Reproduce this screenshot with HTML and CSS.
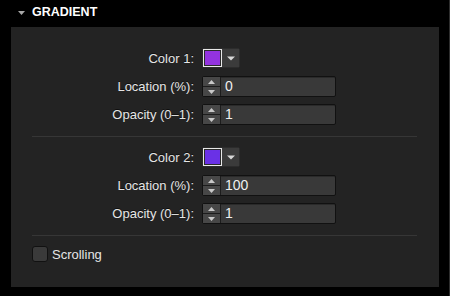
FILE: index.html
```html
<!DOCTYPE html>
<html lang="en">
<head>
    <meta charset="UTF-8">
    <title>Gradient</title>
    <link rel="stylesheet" href="styles.css">
</head>
<body>

    <div class="inspector">
        <div class="section-head">
            <svg class="disclosure" width="7" height="4" viewBox="0 0 7 4"><path d="M0 0H7L3.5 4Z" fill="#a8a8a8"/></svg>
            <span>GRADIENT</span>
        </div>

        <div class="panel">
            <!-- first stop -->
            <div class="group">
                <label class="field-label">Color 1:</label>
                <div class="color-well">
                    <span class="swatch swatch-one"></span>
                    <span class="well-menu">
                        <svg width="8" height="5" viewBox="0 0 8 5"><path d="M0 0.5H8L4 4.5Z" fill="#d8d8d8"/></svg>
                    </span>
                </div>

                <label class="field-label">Location (%):</label>
                <div class="number-field">
                    <span class="stepper">
                        <span class="step"><svg width="7" height="4" viewBox="0 0 7 4"><path d="M0 4H7L3.5 0Z" fill="#c9c9c9"/></svg></span>
                        <span class="step"><svg width="7" height="4" viewBox="0 0 7 4"><path d="M0 0H7L3.5 4Z" fill="#c9c9c9"/></svg></span>
                    </span>
                    <span class="value">0</span>
                </div>

                <label class="field-label">Opacity (0&ndash;1):</label>
                <div class="number-field">
                    <span class="stepper">
                        <span class="step"><svg width="7" height="4" viewBox="0 0 7 4"><path d="M0 4H7L3.5 0Z" fill="#c9c9c9"/></svg></span>
                        <span class="step"><svg width="7" height="4" viewBox="0 0 7 4"><path d="M0 0H7L3.5 4Z" fill="#c9c9c9"/></svg></span>
                    </span>
                    <span class="value">1</span>
                </div>
            </div>

            <hr class="divider">

            <!-- second stop -->
            <div class="group">
                <label class="field-label">Color 2:</label>
                <div class="color-well">
                    <span class="swatch swatch-two"></span>
                    <span class="well-menu">
                        <svg width="8" height="5" viewBox="0 0 8 5"><path d="M0 0.5H8L4 4.5Z" fill="#d8d8d8"/></svg>
                    </span>
                </div>

                <label class="field-label">Location (%):</label>
                <div class="number-field">
                    <span class="stepper">
                        <span class="step"><svg width="7" height="4" viewBox="0 0 7 4"><path d="M0 4H7L3.5 0Z" fill="#c9c9c9"/></svg></span>
                        <span class="step"><svg width="7" height="4" viewBox="0 0 7 4"><path d="M0 0H7L3.5 4Z" fill="#c9c9c9"/></svg></span>
                    </span>
                    <span class="value">100</span>
                </div>

                <label class="field-label">Opacity (0&ndash;1):</label>
                <div class="number-field">
                    <span class="stepper">
                        <span class="step"><svg width="7" height="4" viewBox="0 0 7 4"><path d="M0 4H7L3.5 0Z" fill="#c9c9c9"/></svg></span>
                        <span class="step"><svg width="7" height="4" viewBox="0 0 7 4"><path d="M0 0H7L3.5 4Z" fill="#c9c9c9"/></svg></span>
                    </span>
                    <span class="value">1</span>
                </div>
            </div>

            <hr class="divider">

            <label class="check-row">
                <span class="checkbox"></span>
                <span>Scrolling</span>
            </label>
        </div>
    </div>

</body>
</html>
```

FILE: styles.css
```css
* {
    margin: 0;
    padding: 0;
    box-sizing: border-box;
}

body {
    background: #000;
    font-family: 'Liberation Sans', Arial, sans-serif;
    color: #e4e4e4;
    width: 450px;
    height: 296px;
    overflow: hidden;
}

.inspector {
    width: 449px;
    height: 296px;
    border-right: 1px solid #2e2e2e;
    box-sizing: content-box;
}

.section-head {
    height: 27px;
    display: flex;
    align-items: center;
    gap: 7px;
    padding-left: 18px;
    padding-bottom: 3px;
    font-size: 12.5px;
    font-weight: bold;
    color: #fff;
}

.disclosure {
    margin-top: 1px;
}

.panel {
    margin-left: 11px;
    width: 428px;
    height: 260px;
    background: #232323;
    padding: 21px 22px 0 21px;
}

.group {
    display: grid;
    grid-template-columns: 162px 134px;
    column-gap: 8px;
    row-gap: 7px;
    grid-auto-rows: 21px;
    align-items: center;
}

.field-label {
    text-align: right;
    font-size: 13px;
    color: #e6e6e6;
    text-shadow: 0 -1px 0 rgba(0, 0, 0, 0.6);
}

.color-well {
    width: 38px;
    height: 20px;
    display: flex;
    background: #3a3a3a;
    border: 1px solid #2c2c2c;
    border-radius: 2px;
    align-self: start;
}

.swatch {
    width: 19px;
    height: 18px;
    border: 1px solid #e8e8e8;
    box-shadow: inset 0 0 0 1px #2a2a2a;
}

.swatch-one {
    background: #9333df;
}

.swatch-two {
    background: #6a31e6;
}

.well-menu {
    flex: 1;
    display: flex;
    align-items: center;
    justify-content: center;
    background: #3b3b3b;
}

.number-field {
    height: 21px;
    display: flex;
    border: 1px solid #111;
    border-radius: 2px;
    background: #393939;
    box-shadow: inset 0 1px 0 #2a2a2a;
}

.stepper {
    width: 18px;
    display: flex;
    flex-direction: column;
    border-right: 1px solid #1c1c1c;
}

.step {
    flex: 1;
    display: flex;
    align-items: center;
    justify-content: center;
    background: #474747;
}

.step + .step {
    border-top: 1px solid #1c1c1c;
}

.value {
    padding-left: 4px;
    font-size: 14px;
    line-height: 19px;
    color: #f0f0f0;
}

.divider {
    border: none;
    height: 1px;
    background: #363636;
    margin: 11px 0 10px;
}

.divider + .check-row {
    margin-top: 2px;
}

.check-row {
    display: flex;
    align-items: center;
    gap: 4px;
    font-size: 13px;
    color: #e6e6e6;
}

.checkbox {
    width: 16px;
    height: 16px;
    border: 1px solid #111;
    border-radius: 3px;
    background: #3a3a3a;
}
```
